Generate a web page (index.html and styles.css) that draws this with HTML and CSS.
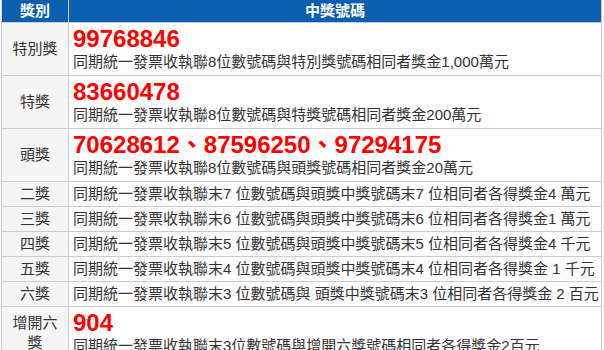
FILE: index.html
```html
<!DOCTYPE html>
<html lang="zh-Hant">
<head>
<meta charset="utf-8">
<title>中獎號碼</title>
<link rel="stylesheet" href="styles.css">
</head>
<body>
<table class="prize-table">
  <colgroup><col class="c1"><col class="c2"></colgroup>
  <thead>
    <tr><th>獎別</th><th>中獎號碼</th></tr>
  </thead>
  <tbody>
    <tr class="big">
      <td class="name">特別獎</td>
      <td class="info"><div class="num">99768846</div><div class="desc">同期統一發票收執聯8位數號碼與特別獎號碼相同者獎金1,000萬元</div></td>
    </tr>
    <tr class="big">
      <td class="name">特獎</td>
      <td class="info"><div class="num">83660478</div><div class="desc">同期統一發票收執聯8位數號碼與特獎號碼相同者獎金200萬元</div></td>
    </tr>
    <tr class="big">
      <td class="name">頭獎</td>
      <td class="info"><div class="num">70628612、87596250、97294175</div><div class="desc">同期統一發票收執聯8位數號碼與頭獎號碼相同者獎金20萬元</div></td>
    </tr>
    <tr>
      <td class="name">二獎</td>
      <td class="info">同期統一發票收執聯末7 位數號碼與頭獎中獎號碼末7 位相同者各得獎金4 萬元</td>
    </tr>
    <tr>
      <td class="name">三獎</td>
      <td class="info">同期統一發票收執聯末6 位數號碼與頭獎中獎號碼末6 位相同者各得獎金1 萬元</td>
    </tr>
    <tr>
      <td class="name">四獎</td>
      <td class="info">同期統一發票收執聯末5 位數號碼與頭獎中獎號碼末5 位相同者各得獎金4 千元</td>
    </tr>
    <tr>
      <td class="name">五獎</td>
      <td class="info">同期統一發票收執聯末4 位數號碼與頭獎中獎號碼末4 位相同者各得獎金 1 千元</td>
    </tr>
    <tr>
      <td class="name">六獎</td>
      <td class="info">同期統一發票收執聯末3 位數號碼與 頭獎中獎號碼末3 位相同者各得獎金 2 百元</td>
    </tr>
    <tr class="big">
      <td class="name">增開六獎</td>
      <td class="info"><div class="num">904</div><div class="desc">同期統一發票收執聯末3位數號碼與增開六獎號碼相同者各得獎金2百元</div></td>
    </tr>
  </tbody>
</table>
</body>
</html>
```

FILE: styles.css
```css
html, body {
  margin: 0;
  padding: 0;
  background: #fff;
}
body {
  font-family: "Liberation Sans", Arial, "Noto Sans CJK TC", sans-serif;
  font-size: 15px;
  color: #333;
}
.prize-table {
  margin-left: 1px;
  width: 601px;
  table-layout: fixed;
  border-collapse: collapse;
}
.c1 { width: 67px; }
.prize-table th {
  background: #0b5fae;
  color: #fff;
  font-weight: bold;
  font-size: 15px;
  line-height: 20px;
  padding: 1px 4px 1px;
  text-align: center;
  border: 1px solid #cccccc;
  border-top: 0;
  border-left-color: #d0d0d0;
}
.prize-table td {
  border: 1px solid #cccccc;
  line-height: 20px;
  padding: 2px 4px;
  vertical-align: middle;
  white-space: nowrap;
}
.prize-table td.name {
  background: #f5f5f5;
  text-align: center;
  white-space: normal;
  padding: 2px 6px;
}
.prize-table tr.big td.info {
  padding: 3px 3px 3px 4px;
}
.num {
  color: #ff0000;
  font-weight: bold;
  font-size: 24px;
  line-height: 26px;
}
.desc {
  line-height: 20px;
}
```
